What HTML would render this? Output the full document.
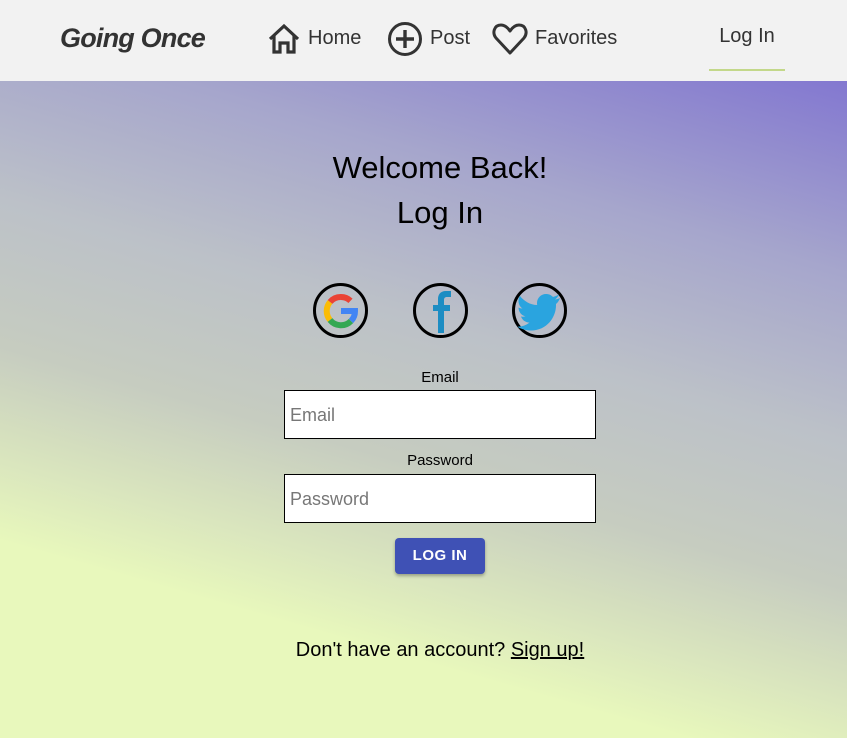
<!DOCTYPE html>
<html><head><meta charset="utf-8"><style>
*{box-sizing:border-box;margin:0;padding:0}
body{width:847px;height:738px;overflow:hidden;font-family:"Liberation Sans",sans-serif;
background:linear-gradient(196deg,#7464d2 0%,#a6a6cc 28%,#bcc1c8 45%,#c6ccc0 60%,#e8f8bc 80%,#e8f8bc 100%);position:relative}
.nav{position:absolute;left:0;top:0;width:847px;height:81px;background:#f2f2f2}
.logo{position:absolute;left:60px;top:23px;font-size:27px;font-weight:bold;font-style:italic;color:#333;letter-spacing:-0.8px}
.item{position:absolute;top:20px;display:flex;align-items:center;font-size:20px;color:#333;height:36px;padding-top:1px}
.item svg{margin-right:7px}
.login{position:absolute;left:709px;top:0;width:76px;height:71px;border-bottom:2px solid #c3d88a;text-align:center;font-size:20px;color:#333;padding-top:25px}
h1{position:absolute;left:0;width:880px;text-align:center;font-weight:normal;font-size:31px;color:#000}
.soc{position:absolute;top:283px;width:55px;height:55px;border:3px solid #000;border-radius:50%;display:flex;align-items:center;justify-content:center}
.lbl{position:absolute;left:0;width:880px;text-align:center;font-size:15px;color:#000}
.inp{position:absolute;left:284px;width:312px;height:49px;background:#fff;border:1px solid #000;font-size:18px;color:#777;padding:14px 0 0 5px}
.btn{position:absolute;left:395px;top:538px;width:90px;height:36px;background:#3f51b5;border-radius:4px;color:#fff;font-size:15px;font-weight:bold;letter-spacing:0.5px;text-align:center;line-height:36px;box-shadow:0 2px 3px rgba(0,0,0,.3)}
.foot{position:absolute;left:0;width:880px;top:639px;text-align:center;font-size:20px;color:#000}
</style></head><body>
<div class="nav">
<div class="logo">Going Once</div>
<div class="item" style="left:267px"><svg width="34" height="34" viewBox="0 0 34 34"><path d="M3 17 L17 4 L31 17 M7 14 V30 H13 V21 H21 V30 H27 V14" fill="none" stroke="#333" stroke-width="3.2" stroke-linejoin="miter"/></svg>Home</div>
<div class="item" style="left:387px"><svg width="36" height="36" viewBox="0 0 36 36"><circle cx="18" cy="18" r="15.5" fill="none" stroke="#333" stroke-width="3"/><path d="M18 9V27M9 18H27" stroke="#333" stroke-width="3.4"/></svg>Post</div>
<div class="item" style="left:492px"><svg width="36" height="34" viewBox="0 0 36 34"><path d="M18 31 L4 16 C0 11 2 3 9 3 C13 3 16 6 18 9 C20 6 23 3 27 3 C34 3 36 11 32 16 Z" fill="none" stroke="#333" stroke-width="3" stroke-linejoin="round"/></svg>Favorites</div>
<div class="login">Log In</div>
</div>
<h1 style="top:150px">Welcome Back!</h1>
<h1 style="top:195px">Log In</h1>
<div class="soc" style="left:313px"><svg width="40" height="40" viewBox="0 0 40 40">
<path d="M20 6 A14 14 0 0 1 29.5 9.8" fill="none" stroke="#ea4335" stroke-width="6"/>
<path d="M9 11 A14 14 0 0 1 20 6" fill="none" stroke="#ea4335" stroke-width="6"/>
<path d="M9 11 A14 14 0 0 0 9 29" fill="none" stroke="#fbbc05" stroke-width="6"/>
<path d="M9 29 A14 14 0 0 0 30 30" fill="none" stroke="#34a853" stroke-width="6"/>
<path d="M30 30 A14 14 0 0 0 34 20 H20" fill="none" stroke="#4285f4" stroke-width="6"/></svg></div>
<div class="soc" style="left:413px"><svg width="40" height="44" viewBox="0 0 40 44"><path d="M23 44 V22 H29 V16 H23 V11 C23 9 24 8 26 8 H30 V2 H25 C19 2 17 6 17 10 V16 H12 V22 H17 V44 Z" fill="#1d8dc3"/></svg></div>
<div class="soc" style="left:512px"><svg width="44" height="40" viewBox="0 0 44 40"><path d="M42 7 C40 8 39 8 37 8.5 C39 7 40 5.5 41 3.5 C39 4.5 37 5.5 35 6 C33 4 31 3 28 3 C23 3 19 7 19 12 C19 13 19 13.5 19.3 14 C12 14 6 10 2 5 C1 6 0.5 8 0.5 10 C0.5 13 2 16 4.5 17.5 C3 17.5 1.5 17 0.5 16.5 C0.5 21 3.5 24.5 7.5 25.3 C6 25.8 4.5 25.8 3 25.5 C4.2 29 7.5 31.5 11.5 31.6 C7.5 34.6 3 36 -1 35.5 C3 38 8 39.5 13 39.5 C29 39.5 38 26 38 14.5 V13 C40 11.5 41 9.5 42 7 Z" fill="#2aa4df"/></svg></div>
<div class="lbl" style="top:369px;">Email</div>
<div class="inp" style="top:390px">Email</div>
<div class="lbl" style="top:452px;">Password</div>
<div class="inp" style="top:474px">Password</div>
<div class="btn">LOG IN</div>
<div class="foot">Don't have an account? <u>Sign up!</u></div>
</body></html>
